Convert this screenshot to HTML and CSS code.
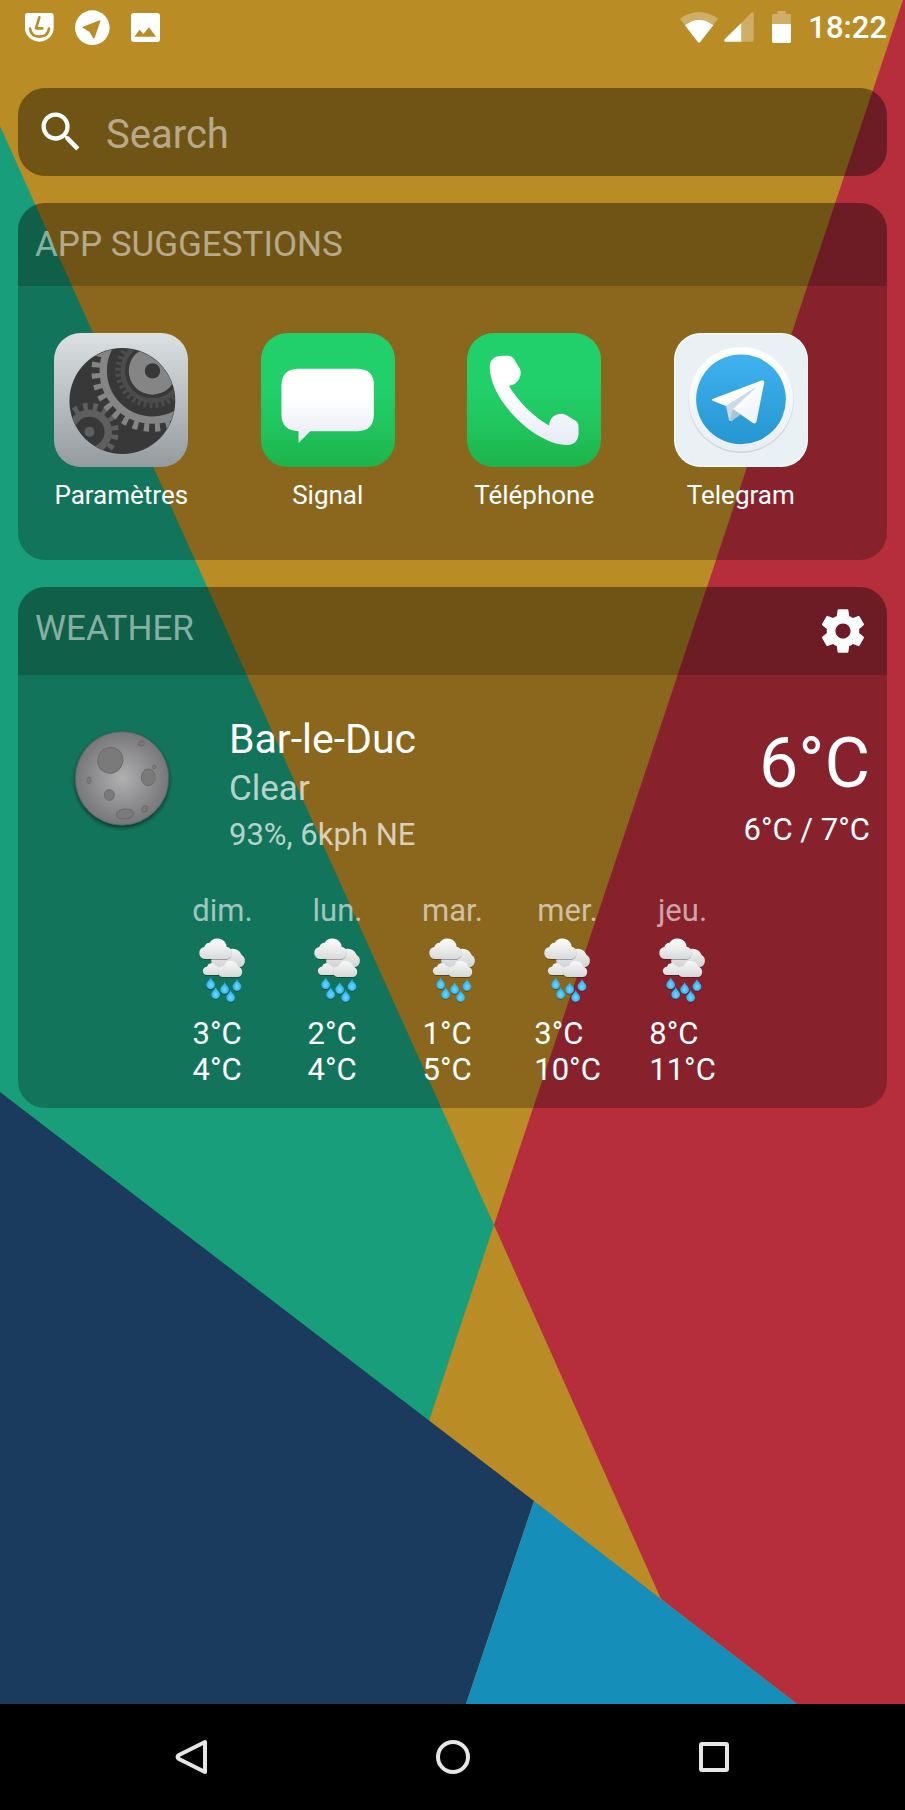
FILE: index.html
```html
<!DOCTYPE html>
<html lang="fr">
<head>
    <meta charset="UTF-8">
    <meta name="viewport" content="width=device-width, initial-scale=1">
    <title>Launcher</title>
    <link rel="stylesheet" href="styles.css">
</head>
<body>
    <!-- Shared drawings -->
    <svg class="defs" width="0" height="0" aria-hidden="true">
        <defs>
            <linearGradient id="cloud-a" gradientUnits="userSpaceOnUse" x1="0" y1="206" x2="0" y2="270">
                <stop offset="0" stop-color="#fff"/><stop offset="1" stop-color="#d9dadb"/>
            </linearGradient>
            <linearGradient id="cloud-b" gradientUnits="userSpaceOnUse" x1="0" y1="228" x2="0" y2="298">
                <stop offset="0" stop-color="#fafafa"/><stop offset="1" stop-color="#cfd0d1"/>
            </linearGradient>
            <linearGradient id="cloud-c" gradientUnits="userSpaceOnUse" x1="0" y1="273" x2="0" y2="324">
                <stop offset="0" stop-color="#fbfbfb"/><stop offset="1" stop-color="#d6d7d8"/>
            </linearGradient>
            <radialGradient id="drop-fill" cx="0.5" cy="0.65" r="0.5">
                <stop offset="0" stop-color="#7ad6fc"/><stop offset="1" stop-color="#22b0f5"/>
            </radialGradient>
            <filter id="soft" x="-20%" y="-20%" width="140%" height="150%">
                <feDropShadow dx="0" dy="2" stdDeviation="2" flood-opacity="0.45"/>
            </filter>
            <path id="drop" fill="url(#drop-fill)" d="M0 -19C2 -10 13 -5 13 4A13 12 0 0 1 -13 4C-13 -5 -2 -10 0 -19Z"/>
        </defs>
        <symbol id="rain" viewBox="68 180 180 240">
            <g filter="url(#soft)" fill="url(#cloud-b)">
                <path d="M142 298A20 20 0 0 1 123 278V262H160A28 28 0 0 1 214 258A20 20 0 0 1 210 294Q200 299 190 298Z"/>
            </g>
            <g filter="url(#soft)" fill="url(#cloud-c)">
                <path d="M110 318A12 12 0 0 1 110 293A14 14 0 0 1 135 289L156 300V318Z"/>
            </g>
            <g filter="url(#soft)" fill="url(#cloud-c)">
                <path d="M157 324A15 15 0 0 1 143 309A15 15 0 0 1 160 291A23 23 0 0 1 204 293A16 16 0 0 1 203 324Z"/>
            </g>
            <g filter="url(#soft)" fill="url(#cloud-a)">
                <path d="M104 270A17 17 0 0 1 87 252A18 18 0 0 1 102 234A17 17 0 0 1 118 221A28 28 0 0 1 169 233A19 19 0 0 1 169 270Z"/>
            </g>
            <g filter="url(#soft)">
                <use href="#drop" x="121" y="344"/>
                <use href="#drop" x="136" y="373"/>
                <use href="#drop" x="163" y="358"/>
                <use href="#drop" x="200" y="349"/>
                <use href="#drop" x="181" y="382"/>
            </g>
        </symbol>
    </svg>

    <div class="home">
        <svg class="wallpaper" viewBox="0 0 905 1704" preserveAspectRatio="none" aria-hidden="true">
            <rect width="905" height="1704" fill="#ba8c26"/>
            <path fill="#199e7b" d="M0 126L494 1225L429 1421L0 1093Z"/>
            <path fill="#b62d3c" d="M903 0H905V1704H797L661 1599L494 1225Z"/>
            <path fill="#1a3b5d" d="M0 1092L534 1501L466 1704H0Z"/>
            <path fill="#168eba" d="M534 1501L797 1704H466Z"/>
        </svg>

        <header class="status-bar">
            <div class="status-left">
                <svg width="29" height="29" viewBox="76 36 87 87">
                    <path fill="#fff" d="M84 36H154Q162 36 162 44V80A43 42 0 0 1 76 80V44Q76 36 84 36Z"/>
                    <path fill="none" stroke="#ba8c26" stroke-width="8" stroke-linecap="round" stroke-linejoin="round" d="M119 49L109 82H128M91 83Q94 107 119 107Q145 107 148 83"/>
                </svg>
                <svg width="35" height="35" viewBox="225 26 105 105">
                    <circle cx="277" cy="79" r="52" fill="#fff"/>
                    <path fill="#ba8c26" d="M249 76L299 57Q302 56 301 60L284 109Q281 113 278 108L268 91L249 80Q246 78 249 76Z"/>
                </svg>
                <svg width="29" height="29" viewBox="393 36 87 87">
                    <rect x="393" y="36" width="87" height="87" rx="9" fill="#fff"/>
                    <path fill="#ba8c26" d="M403 107L419 86L430 99L447 79L468 107Z"/>
                </svg>
            </div>
            <div class="status-right">
                <svg class="wifi" width="38" height="31" viewBox="683 32 114 93">
                    <path fill="#fff" fill-opacity="0.3" d="M683 52Q740 12 797 52L744 121Q740 126 736 121Z"/>
                    <path fill="#fff" d="M698 72Q740 40 783 72L744 121Q740 126 736 121Z"/>
                </svg>
                <svg class="signal" width="30" height="30" viewBox="815 37 90 90">
                    <path fill="#fff" fill-opacity="0.3" d="M867 70L896 40Q904 34 904 43V121Q904 126 899 126H867Z"/>
                    <path fill="#fff" d="M867 70V126H820Q813 126 817 119Z"/>
                </svg>
                <svg class="battery" width="19" height="32" viewBox="960 30 57 96">
                    <path fill="#fff" fill-opacity="0.3" d="M976 30H1001V39H1012Q1017 39 1017 44V69H960V44Q960 39 965 39H976Z"/>
                    <path fill="#fff" d="M960 69H1017V121Q1017 126 1012 126H965Q960 126 960 121Z"/>
                </svg>
                <span class="clock">18:22</span>
            </div>
        </header>

        <main class="content">
            <label class="search">
                <svg width="52" height="52" viewBox="0 0 24 24" aria-hidden="true">
                    <path fill="#fff" d="M15.5 14h-.79l-.28-.27C15.41 12.59 16 11.11 16 9.5 16 5.91 13.09 3 9.5 3S3 5.91 3 9.5 5.91 16 9.5 16c1.61 0 3.09-.59 4.23-1.57l.27.28v.79l5 4.99L20.49 19l-4.99-5zm-6 0C7.01 14 5 11.99 5 9.5S7.01 5 9.5 5 14 7.01 14 9.5 11.99 14 9.5 14z"/>
                </svg>
                <input class="search-input" type="text" placeholder="Search">
            </label>

            <section class="card">
                <div class="card-header">
                    <h2>APP SUGGESTIONS</h2>
                </div>
                <div class="card-body apps">
                    <a class="app" href="#">
                        <svg width="134" height="134" viewBox="163 100 400 400" aria-hidden="true">
                            <defs>
                                <linearGradient id="steel" x2="0" y2="1"><stop offset="0" stop-color="#dce0e2"/><stop offset="1" stop-color="#949b9f"/></linearGradient>
                                <clipPath id="dial"><circle cx="367" cy="303" r="157"/></clipPath>
                            </defs>
                            <rect x="163" y="100" width="400" height="400" rx="80" fill="url(#steel)"/>
                            <circle cx="367" cy="303" r="158" fill="#373837"/>
                            <g clip-path="url(#dial)" fill="none">
                                <g stroke="#5e5f5e">
                                    <circle cx="269" cy="395" r="56" stroke-width="22"/>
                                    <circle cx="269" cy="395" r="75" stroke-width="24" pathLength="160" stroke-dasharray="4.6 5.4" stroke-dashoffset="-3"/>
                                </g>
                                <circle cx="269" cy="395" r="15" fill="#5e5f5e"/>
                                <g stroke="#848584">
                                    <circle cx="457" cy="213" r="147" stroke-width="22"/>
                                    <circle cx="457" cy="213" r="169" stroke-width="26" pathLength="320" stroke-dasharray="4.6 5.4" stroke-dashoffset="-3"/>
                                </g>
                                <g stroke="#4b4c4b">
                                    <circle cx="457" cy="213" r="89" stroke-width="14"/>
                                    <circle cx="457" cy="213" r="103" stroke-width="16" pathLength="360" stroke-dasharray="5 5"/>
                                </g>
                                <circle cx="457" cy="213" r="71" fill="#848584"/>
                                <circle cx="457" cy="213" r="23" fill="#373837"/>
                            </g>
                        </svg>
                        <span>Paramètres</span>
                    </a>
                    <a class="app" href="#">
                        <svg width="134" height="134" viewBox="785 100 400 400" aria-hidden="true">
                            <defs>
                                <linearGradient id="green" x2="0" y2="1"><stop offset="0.4" stop-color="#21d06b"/><stop offset="0.7" stop-color="#20c45d"/><stop offset="1" stop-color="#1db34a"/></linearGradient>
                                <linearGradient id="paper" x2="0" y2="1"><stop offset="0.4" stop-color="#fff"/><stop offset="1" stop-color="#e6eaf4"/></linearGradient>
                            </defs>
                            <rect x="785" y="100" width="400" height="400" rx="80" fill="url(#green)"/>
                            <path fill="url(#paper)" d="M894 207H1074Q1122 209 1122 255V346Q1120 391 1074 393H932L897 428V393Q848 391 846 346V255Q848 209 894 207Z"/>
                        </svg>
                        <span>Signal</span>
                    </a>
                    <a class="app" href="#">
                        <svg width="134" height="134" viewBox="46 100 400 400" aria-hidden="true">
                            <rect x="46" y="100" width="400" height="400" rx="80" fill="url(#green)"/>
                            <path fill="url(#paper)" d="M114 202C114 180 128 168 150 168H166C178 168 184 173 190 184L202 203C208 214 208 225 202 236C195 250 184 256 171 258C200 305 245 350 291 376C293 355 305 342 328 341C337 341 343 345 350 350L370 362C378 367 379 372 379 384V400C378 422 366 434 345 434C250 434 114 300 114 202Z"/>
                        </svg>
                        <span>Téléphone</span>
                    </a>
                    <a class="app" href="#">
                        <svg width="134" height="134" viewBox="667 100 400 400" aria-hidden="true">
                            <defs>
                                <linearGradient id="sky" x2="0" y2="1"><stop offset="0" stop-color="#3eb2f0"/><stop offset="1" stop-color="#2596d0"/></linearGradient>
                                <linearGradient id="plane" x2="1" y2="1"><stop offset="0.4" stop-color="#fff"/><stop offset="1" stop-color="#e8eff6"/></linearGradient>
                                <linearGradient id="rim" x2="0" y2="1"><stop offset="0" stop-color="#fff"/><stop offset="1" stop-color="#e9eef4"/></linearGradient>
                            </defs>
                            <rect x="667" y="100" width="400" height="400" rx="80" fill="#fff"/>
                            <rect x="670" y="103" width="394" height="394" rx="77" fill="#eaf1f5"/>
                            <circle cx="867" cy="301" r="157" fill="#cfd5da"/>
                            <circle cx="867" cy="298" r="156" fill="url(#rim)"/>
                            <circle cx="867" cy="298" r="134" fill="url(#sky)"/>
                            <path fill="#c9dae9" d="M822 318L914 258L845 327L841 361Q833 366 831 358Z"/>
                            <path fill="#adc5d8" d="M843 327L866 343L841 361Q834 366 835 357Z"/>
                            <path fill="url(#plane)" d="M782 297L930 241Q938 241 936 250L913 366Q910 373 902 369L843 327L911 262L822 318L784 303Q777 300 782 297Z"/>
                        </svg>
                        <span>Telegram</span>
                    </a>
                </div>
            </section>

            <section class="card">
                <div class="card-header">
                    <h2>WEATHER</h2>
                    <button class="settings-btn" type="button" title="Settings">
                        <svg width="52" height="52" viewBox="0 0 24 24" aria-hidden="true">
                            <path fill="#fff" d="M19.43 12.98c.04-.32.07-.64.07-.98s-.03-.66-.07-.98l2.11-1.65c.19-.15.24-.42.12-.64l-2-3.46c-.12-.22-.39-.3-.61-.22l-2.49 1c-.52-.4-1.08-.73-1.69-.98l-.38-2.65C14.46 2.18 14.25 2 14 2h-4c-.25 0-.46.18-.49.42l-.38 2.65c-.61.25-1.17.59-1.69.98l-2.49-1c-.23-.09-.49 0-.61.22l-2 3.46c-.13.22-.07.49.12.64l2.11 1.65c-.04.32-.07.65-.07.98s.03.66.07.98l-2.11 1.65c-.19.15-.24.42-.12.64l2 3.46c.12.22.39.3.61.22l2.49-1c.52.4 1.08.73 1.69.98l.38 2.65c.03.24.24.42.49.42h4c.25 0 .46-.18.49-.42l.38-2.65c.61-.25 1.17-.59 1.69-.98l2.49 1c.23.09.49 0 .61-.22l2-3.46c.12-.22.07-.49-.12-.64l-2.11-1.65zM12 15.5c-1.93 0-3.5-1.57-3.5-3.5s1.57-3.5 3.5-3.5 3.5 1.57 3.5 3.5-1.57 3.5-3.5 3.5z"/>
                        </svg>
                    </button>
                </div>
                <div class="card-body weather">
                    <div class="current">
                        <svg class="moon" width="104" height="114" viewBox="211 443 312 342" aria-hidden="true">
                            <defs>
                                <radialGradient id="moon"><stop offset="0" stop-color="#b0b0b1"/><stop offset="1" stop-color="#77777a"/></radialGradient>
                                <filter id="moon-shadow" x="-20%" y="-20%" width="140%" height="140%"><feDropShadow dx="0" dy="6" stdDeviation="6" flood-opacity="0.6"/></filter>
                            </defs>
                            <circle cx="367" cy="594" r="140" fill="url(#moon)" stroke="#5e5f60" stroke-width="2" filter="url(#moon-shadow)"/>
                            <g fill="#7a7a7a" stroke="#6a6a6b" stroke-width="3">
                                <ellipse cx="332" cy="540" rx="37" ry="39" transform="rotate(30 332 540)"/>
                                <ellipse cx="446" cy="591" rx="21" ry="25"/>
                                <ellipse cx="329" cy="644" rx="15" ry="16"/>
                                <ellipse cx="376" cy="701" rx="26" ry="15" transform="rotate(-5 376 701)"/>
                                <ellipse cx="425" cy="490" rx="9" ry="7"/>
                                <ellipse cx="464" cy="560" rx="5" ry="6"/>
                                <ellipse cx="268" cy="600" rx="6" ry="10"/>
                                <ellipse cx="435" cy="686" rx="7" ry="10" transform="rotate(35 435 686)"/>
                            </g>
                        </svg>
                        <div class="place">
                            <div class="city">Bar-le-Duc</div>
                            <div class="condition">Clear</div>
                            <div class="details">93%, 6kph NE</div>
                        </div>
                        <div class="temperature">
                            <div class="now">6°C</div>
                            <div class="range">6°C / 7°C</div>
                        </div>
                    </div>
                    <div class="forecast">
                        <div class="day">
                            <span class="day-name">dim.</span>
                            <svg width="60" height="80"><use href="#rain"/></svg>
                            <span class="temps">3°C<br>4°C</span>
                        </div>
                        <div class="day">
                            <span class="day-name">lun.</span>
                            <svg width="60" height="80"><use href="#rain"/></svg>
                            <span class="temps">2°C<br>4°C</span>
                        </div>
                        <div class="day">
                            <span class="day-name">mar.</span>
                            <svg width="60" height="80"><use href="#rain"/></svg>
                            <span class="temps">1°C<br>5°C</span>
                        </div>
                        <div class="day">
                            <span class="day-name">mer.</span>
                            <svg width="60" height="80"><use href="#rain"/></svg>
                            <span class="temps">3°C<br>10°C</span>
                        </div>
                        <div class="day">
                            <span class="day-name">jeu.</span>
                            <svg width="60" height="80"><use href="#rain"/></svg>
                            <span class="temps">8°C<br>11°C</span>
                        </div>
                    </div>
                </div>
            </section>
        </main>
    </div>

    <nav class="nav-bar">
        <button type="button" title="Back">
            <svg width="36" height="36" viewBox="0 0 36 36"><path d="M31 3V33L5 20Q2 18 5 16Z"/></svg>
        </button>
        <button type="button" title="Home">
            <svg width="36" height="36" viewBox="0 0 36 36"><circle cx="18" cy="18" r="15"/></svg>
        </button>
        <button type="button" title="Recents">
            <svg width="36" height="36" viewBox="0 0 36 36"><rect x="5" y="5" width="26" height="26" rx="1"/></svg>
        </button>
    </nav>
</body>
</html>
```

FILE: styles.css
```css
* { box-sizing: border-box; }
body {
    margin: 0;
    min-height: 100vh;
    display: flex;
    flex-direction: column;
    font-family: Roboto, sans-serif;
    color: #fff;
    background: #000;
}
svg { display: block; flex: none; }
.defs { position: absolute; }

button {
    background: none;
    border: none;
    padding: 0;
    cursor: pointer;
}

.home {
    position: relative;
    z-index: 0;
    flex: 1;
    overflow: hidden;
}

/* full-bleed background behind the cards */
.wallpaper {
    position: absolute;
    inset: 0;
    width: 100%;
    height: 100%;
    z-index: -1;
}

/* Status bar */
.status-bar {
    height: 54px;
    padding: 0 18px 0 25px;
    display: flex;
    justify-content: space-between;
    align-items: center;
}
.status-left {
    display: flex;
    align-items: center;
    gap: 21px;
}
.status-right {
    display: flex;
    align-items: center;
}
.wifi { margin-right: 6px; }
.signal { margin-right: 18px; }
.battery { margin-right: 17px; }
.clock {
    padding-top: 2px;
    font-size: 31px;
    font-weight: 500;
    line-height: 36px;
}

/* Cards */
.content {
    padding: 34px 18px 27px;
    display: flex;
    flex-direction: column;
    gap: 27px;
}
.search {
    height: 88px;
    padding: 0 17px;
    display: flex;
    align-items: center;
    gap: 19px;
    border-radius: 27px;
    background: rgba(0,0,0,0.4);
}
.search-input {
    flex: 1;
    min-width: 0;
    height: 60px;
    padding: 4px 0 0;
    border: none;
    outline: none;
    background: none;
    color: #fff;
    font-family: inherit;
    font-size: 40px;
}
.search-input::placeholder { color: rgba(255,255,255,0.5); }

.card {
    border-radius: 27px;
    overflow: hidden;
}
.card-header {
    padding: 0 18px 0 17px;
    display: flex;
    justify-content: space-between;
    align-items: flex-start;
    background: rgba(0,0,0,0.4);
}
.card-header h2 {
    margin: 22px 0 21px;
    font-size: 35px;
    font-weight: 400;
    line-height: 40px;
    color: rgba(255,255,255,0.5);
}
.settings-btn { margin: 18px 0; }
.card-body { background: rgba(0,0,0,0.26); }

/* App suggestions */
.apps {
    padding: 47px 43px 50px 0;
    display: grid;
    grid-template-columns: repeat(4, 1fr);
}
.app {
    display: flex;
    flex-direction: column;
    align-items: center;
    gap: 13px;
    color: #fff;
    font-size: 26px;
    line-height: 30px;
    text-decoration: none;
}

/* Weather */
.weather { padding: 40px 17px 20px 0; }
.current {
    display: flex;
    align-items: center;
}
.moon { margin: 0 55px 0 52px; }
.place { flex: 1; }
.city {
    font-size: 41px;
    line-height: 48px;
}
.condition,
.details { color: rgba(255,255,255,0.7); }
.condition {
    font-size: 35px;
    line-height: 52px;
}
.details {
    font-size: 31px;
    line-height: 40px;
}
.temperature {
    padding-top: 6px;
    text-align: right;
}
.now {
    font-size: 70px;
    line-height: 84px;
}
.range {
    font-size: 31px;
    line-height: 50px;
}

.forecast {
    margin: 38px 0 0 17px;
    display: flex;
    justify-content: center;
    gap: 55px;
}
.day {
    width: 60px;
    display: flex;
    flex-direction: column;
    align-items: center;
    font-size: 31px;
    line-height: 36px;
    white-space: nowrap;
}
.day-name { color: rgba(255,255,255,0.6); }
.temps {
    min-width: 60px;
    margin-top: 7px;
}

/* Navigation bar */
.nav-bar {
    height: 106px;
    padding: 0 61px;
    display: flex;
    align-items: center;
    background: #000;
}
.nav-bar button {
    flex: 1;
    display: flex;
    justify-content: center;
}
.nav-bar svg {
    fill: none;
    stroke: #e6e6e6;
    stroke-width: 4;
    stroke-linejoin: round;
}
```
